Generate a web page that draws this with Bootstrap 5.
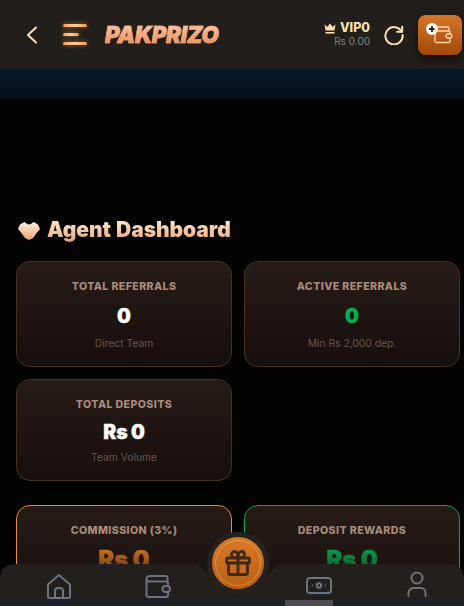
<!DOCTYPE html>
<html lang="en">
<head>
<meta charset="utf-8">
<title>Agent Dashboard</title>
<link rel="stylesheet" href="https://cdn.jsdelivr.net/npm/bootstrap@5.3.0/dist/css/bootstrap.min.css">
<style>
html,body{height:100%;}
body{background:#030301;font-family:Inter,"Open Sans",sans-serif;overflow:hidden;position:relative;}
.topbar{height:69px;background:#221e1b;padding-left:26px;padding-right:2px;}
.menu-lines{width:24px;margin-left:25px;gap:6px;}
.menu-lines span{display:block;height:3px;width:24px;border-radius:2px;background:linear-gradient(90deg,#f59a4a,#ffd29c,#f59a4a);box-shadow:0 0 5px rgba(245,150,70,.6);}
.menu-lines span:nth-child(2){width:16px;}
.brand-text{margin-left:18px;width:116px;font-size:22.500px;line-height:24px;font-weight:900;font-style:italic;letter-spacing:-.35px;white-space:nowrap;-webkit-text-stroke:.5px #f0a57a;background:linear-gradient(180deg,#fdc8ac,#ea8a50);-webkit-background-clip:text;background-clip:text;color:transparent;}
.vip-name{font-size:12.500px;line-height:12px;font-weight:800;color:#fbdfae;}
.vip-bal{font-size:10px;line-height:12px;color:#80838b;margin-top:1px;}
.vip-box{margin-right:14px;}
.wallet-btn{width:44px;height:40px;margin-left:14px;border-radius:8px;border:0;padding:0;background:linear-gradient(180deg,#d4772c,#a24707);box-shadow:0 4px 10px rgba(0,0,0,.5);position:relative;}
.plus-dot{position:absolute;left:8px;top:8px;width:12px;height:12px;}
.wallet-svg{position:absolute;left:15px;top:10px;}
.sub-strip{height:30px;background:linear-gradient(180deg,#07172a,#060f1c);}
.dash{padding:119px 4px 0 16px;}
.dash-title{height:24px;margin-bottom:19px;gap:7px;padding-left:2px;}
.dash-title h1{font-size:21px;line-height:24px;font-weight:900;margin:0;letter-spacing:-.05px;word-spacing:1px;background:linear-gradient(180deg,#fff0e0,#eda66f);-webkit-background-clip:text;background-clip:text;color:transparent;}
.stat-grid{display:grid;grid-template-columns:216px 216px;column-gap:12px;row-gap:12px;}
.stat-box{height:106px;border:1px solid #4a3120;border-radius:14px;background:linear-gradient(180deg,#251b17,#170f0d);text-align:center;padding-top:18px;}
.stat-short{height:102px;}
.stat-gap{margin-top:24px;}
.stat-orange{border-color:#e58a37;}
.stat-green{border-color:#16a34a;}
.stat-label{font-size:10.600px;line-height:13px;font-weight:800;letter-spacing:.4px;color:#a98a78;text-transform:uppercase;}
.stat-value{font-size:19.500px;line-height:24px;font-weight:900;margin-top:11px;color:#fff;word-spacing:-.5px;-webkit-text-stroke:.3px currentColor;}
.v-green{color:#00b04f;}
.v-big{font-size:24px;line-height:28px;margin-top:9px;-webkit-text-stroke:.4px transparent;}
.v-orange-fade{background:linear-gradient(180deg,#d9781f,#5f3510);-webkit-background-clip:text;background-clip:text;color:transparent;}
.v-green-fade{background:linear-gradient(180deg,#0aa44b,#07572c);-webkit-background-clip:text;background-clip:text;color:transparent;}
.stat-note{font-size:10.300px;line-height:13px;margin-top:9px;color:#665850;}
.stat-short .stat-value{margin-top:9px;}
.stat-short .stat-note{margin-top:7px;}
.bottom-wrap{position:absolute;left:0;right:0;bottom:0;height:42px;}
.bottom-nav{position:absolute;left:0;right:0;top:0;height:36px;background:#221f1d;clip-path:path("M0 36V16Q0 0 16 0H197L218 18H258L279 0H448Q464 0 464 16V36Z");}
.bottom-strip{position:absolute;left:0;right:0;bottom:0;height:6px;background:#1c2228;}
.nav-ico{position:absolute;top:9px;}
.ico-home{left:46px;}
.ico-wallet{left:145px;}
.ico-money{left:306px;top:13px;}
.ico-user{left:406px;top:7px;}
.active-bar{position:absolute;left:285px;bottom:0;width:48px;height:6px;background:#4d4e51;}
.gift-btn{position:absolute;left:207px;top:532px;width:62px;height:62px;border-radius:50%;border:5px solid #24211f;padding:0;background:linear-gradient(180deg,#d97a26,#b85f12);}
.gift-ring{position:absolute;inset:3px;border-radius:50%;border:1px solid rgba(255,205,160,.4);}
.gift-btn svg{position:absolute;left:13px;top:13px;}
</style>
</head>
<body>
<header class="topbar d-flex align-items-center">
  <svg width="12" height="18" viewBox="0 0 12 18" fill="none" stroke="#f9dfb0" stroke-width="2" stroke-linecap="round" stroke-linejoin="round"><path d="M10 1.500 2 9l8 7.500"/></svg>
  <div class="menu-lines d-flex flex-column align-items-start"><span></span><span></span><span></span></div>
  <div class="brand-text">PAKPRIZO</div>
  <div class="ms-auto d-flex align-items-center">
    <div class="vip-box text-end">
      <div class="vip-name d-flex align-items-center justify-content-end gap-1">
        <svg width="12" height="11" viewBox="0 0 12 11" fill="#fbdfae"><path d="M0.500 1.500 3.200 4 6 0.500 8.800 4l2.700-2.500-1 6h-9z"/><rect x="1.500" y="9" width="9" height="1.600"/></svg>
        <span>VIP0</span>
      </div>
      <div class="vip-bal">Rs 0.00</div>
    </div>
    <svg width="20" height="20" viewBox="0 0 22 22" fill="none" stroke="#fbdfae" stroke-width="2.200" stroke-linecap="round" stroke-linejoin="round"><path d="M19.500 7.500A9.500 9.500 0 1 0 20.500 11"/><path d="M20 2v5.500h-5.500"/></svg>
    <button class="wallet-btn" type="button" aria-label="Add funds">
      <svg class="plus-dot" viewBox="0 0 12 12"><circle cx="6" cy="6" r="6" fill="#fff"/><path d="M6 3v6M3 6h6" stroke="#222" stroke-width="1.800"/></svg>
      <svg class="wallet-svg" width="20" height="19" viewBox="0 0 20 19" fill="none" stroke="#f9d6ae" stroke-width="1.300"><path d="M3 2h12a1 1 0 0 1 1 1v3M2 3v13a1.500 1.500 0 0 0 1.500 1.500H16a1 1 0 0 0 1-1V13M2 4.500a1.500 1.500 0 0 0 1.500 1.500H16a1 1 0 0 1 1 1v2"/><rect x="13" y="9" width="6" height="4" rx="2"/></svg>
    </button>
  </div>
</header>
<div class="sub-strip"></div>
<main class="dash">
  <div class="dash-title d-flex align-items-center">
    <svg width="22" height="19" viewBox="0 0 22 19"><defs><linearGradient id="hs" x1="0" y1="0" x2="0" y2="1"><stop offset="0" stop-color="#fff0e0"/><stop offset="1" stop-color="#eda66f"/></linearGradient></defs><path fill="url(#hs)" d="M2 3.500 6.500 1 9 3l2 .5L13 3l2.500-2L20 3.500 22 8l-3 3.500-4 5.500-4 2-4-2-4-5.500L0 8z"/></svg>
    <h1>Agent Dashboard</h1>
  </div>
  <div class="stat-grid">
    <div class="stat-box">
      <div class="stat-label">Total Referrals</div>
      <div class="stat-value">0</div>
      <div class="stat-note">Direct Team</div>
    </div>
    <div class="stat-box">
      <div class="stat-label">Active Referrals</div>
      <div class="stat-value v-green">0</div>
      <div class="stat-note">Min Rs 2,000 dep.</div>
    </div>
    <div class="stat-box stat-short">
      <div class="stat-label">Total Deposits</div>
      <div class="stat-value">Rs 0</div>
      <div class="stat-note">Team Volume</div>
    </div>
  </div>
  <div class="stat-grid stat-gap">
    <div class="stat-box stat-orange">
      <div class="stat-label">Commission (3%)</div>
      <div class="stat-value v-big v-orange-fade">Rs 0</div>
    </div>
    <div class="stat-box stat-green">
      <div class="stat-label">Deposit Rewards</div>
      <div class="stat-value v-big v-green-fade">Rs 0</div>
    </div>
  </div>
</main>
<nav class="bottom-wrap">
  <div class="bottom-nav">
    <svg class="nav-ico ico-home" width="26" height="26" viewBox="0 0 26 26" fill="none" stroke="#6b7280" stroke-width="2" stroke-linejoin="round"><path d="M2 24V11.500L13 2l11 9.500V24a1 1 0 0 1-1 1H3a1 1 0 0 1-1-1z"/><path d="M9 25v-7a3 3 0 0 1 3-3h2a3 3 0 0 1 3 3v7"/></svg>
    <svg class="nav-ico ico-wallet" width="26" height="26" viewBox="0 0 26 26" fill="none" stroke="#6b7280" stroke-width="2"><path d="M1.500 6a3 3 0 0 1 3-3h16a2 2 0 0 1 2 2v3M1.500 6a3 3 0 0 0 3 2.500H21a2 2 0 0 1 2 2V13M1.500 6v16a2 2 0 0 0 2 2H21a2 2 0 0 0 2-2v-3"/><rect x="17.500" y="13" width="7.500" height="6" rx="3"/></svg>
    <svg class="nav-ico ico-money" width="26" height="18" viewBox="0 0 26 18" fill="none" stroke="#6b7280" stroke-width="2"><rect x="1" y="1" width="24" height="15" rx="3"/><circle cx="13" cy="8.500" r="2.200"/><path d="M6 8.500h.8M19.200 8.500h.8"/></svg>
    <svg class="nav-ico ico-user" width="22" height="26" viewBox="0 0 22 26" fill="none" stroke="#6b7280" stroke-width="2" stroke-linecap="round"><circle cx="11" cy="7" r="5.500"/><path d="M2.500 25v-3a5 5 0 0 1 5-5h7a5 5 0 0 1 5 5v3"/></svg>
  </div>
  <div class="bottom-strip"></div>
  <div class="active-bar"></div>
</nav>
<button class="gift-btn" type="button" aria-label="Gift">
  <span class="gift-ring"></span>
  <svg width="26" height="26" viewBox="0 0 26 26" fill="none" stroke="#3a281a" stroke-width="2.800" stroke-linecap="round" stroke-linejoin="round"><rect x="1.500" y="8" width="23" height="5" rx="1.500"/><path d="M3.500 13v9.500a2 2 0 0 0 2 2h15a2 2 0 0 0 2-2V13M13 8v16.500"/><path d="M13 8C9 8 6.500 7 6.500 4.500 6.500 2.500 8 1.500 9.500 1.500 12 1.500 13 5 13 8c0-3 1-6.500 3.500-6.500 1.500 0 3 1 3 3C19.500 7 17 8 13 8z"/></svg>
</button>
<script src="https://cdn.jsdelivr.net/npm/bootstrap@5.3.0/dist/js/bootstrap.bundle.min.js"></script>
</body>
</html>
